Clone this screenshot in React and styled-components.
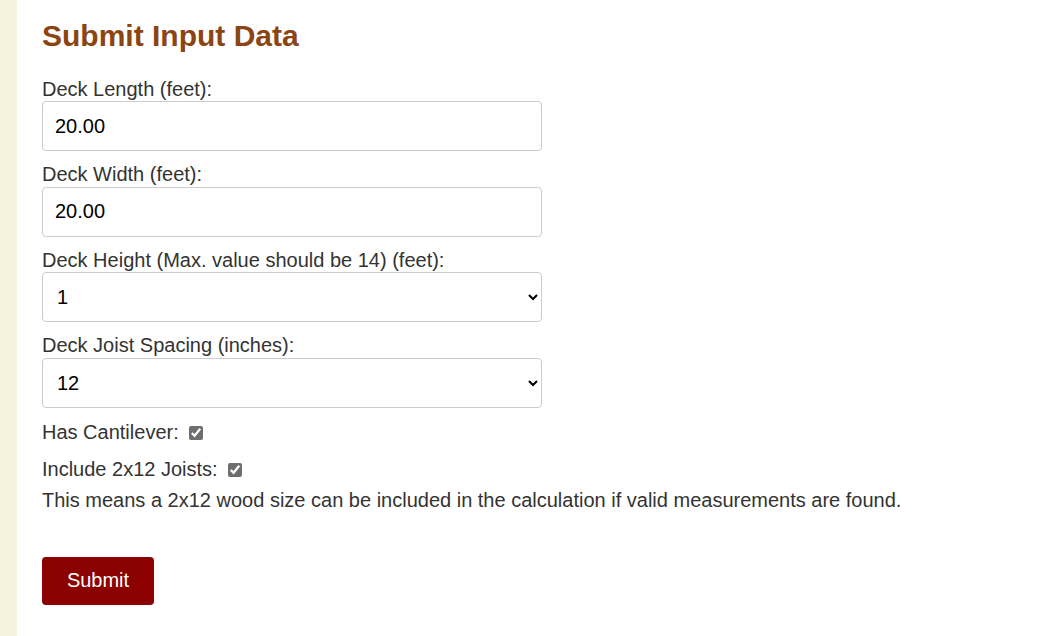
import React from 'react';
import styled, { createGlobalStyle } from 'styled-components';

const GlobalStyle = createGlobalStyle`
  html, body {
    margin: 0;
    padding: 0;
    background: #f5f3dc;
    font-family: "Liberation Sans", Arial, sans-serif;
  }
`;

const Page = styled.div`
  margin-left: 17px;
  min-height: 636px;
  background: #ffffff;
  padding: 19px 25px 30px;
  box-sizing: border-box;
`;

const Heading = styled.h2`
  margin: 0 0 24.5px;
  font-size: 30px;
  line-height: 34px;
  font-weight: 700;
  color: #8b4513;
`;

const Form = styled.form`
  display: flex;
  flex-direction: column;
  align-items: flex-start;
`;

const Label = styled.label`
  font-size: 20px;
  line-height: 23px;
  color: #333;
  margin-bottom: 0.5px;
`;

const Field = styled.input`
  width: 500px;
  height: 50px;
  box-sizing: border-box;
  padding: 0 12px;
  margin: 0 0 12px;
  border: 1px solid #ccc;
  border-radius: 4px;
  font-family: inherit;
  font-size: 20px;
  color: #000;
  background: #fff;
`;

const Select = styled.select`
  width: 500px;
  height: 50px;
  box-sizing: border-box;
  padding: 0 10px;
  margin: 0 0 12px;
  border: 1px solid #ccc;
  border-radius: 4px;
  font-family: inherit;
  font-size: 20px;
  color: #000;
  background: #fff;
`;

const CheckRow = styled.div`
  display: flex;
  align-items: center;
  height: 23px;
  font-size: 20px;
  color: #333;
  margin-top: ${p => p.$top}px;
`;

const Check = styled.input`
  width: 14px;
  height: 14px;
  margin: 0 0 0 10px;
  accent-color: #6e6e6e;
`;

const Note = styled.p`
  margin: 8px 0 44.5px;
  font-size: 20px;
  line-height: 23px;
  color: #333;
`;

const SubmitButton = styled.button`
  width: 112px;
  height: 48px;
  border: none;
  border-radius: 4px;
  background: #8b0000;
  color: #fff;
  font-family: inherit;
  font-size: 20px;
  cursor: pointer;
`;

const heights = Array.from({ length: 14 }, (_, i) => i + 1);

export default function App() {
  return (
    <>
      <GlobalStyle />
      <Page>
        <Heading>Submit Input Data</Heading>
        <Form onSubmit={e => e.preventDefault()}>
          <Label>Deck Length (feet):</Label>
          <Field type="text" defaultValue="20.00" />
          <Label>Deck Width (feet):</Label>
          <Field type="text" defaultValue="20.00" />
          <Label>Deck Height (Max. value should be 14) (feet):</Label>
          <Select defaultValue="1">
            {heights.map(h => (
              <option key={h} value={h}>{h}</option>
            ))}
          </Select>
          <Label>Deck Joist Spacing (inches):</Label>
          <Select defaultValue="12">
            <option value="12">12</option>
            <option value="16">16</option>
            <option value="24">24</option>
          </Select>
          <CheckRow $top={1.5}>
            Has Cantilever:
            <Check type="checkbox" defaultChecked />
          </CheckRow>
          <CheckRow $top={14}>
            Include 2x12 Joists:
            <Check type="checkbox" defaultChecked />
          </CheckRow>
          <Note>
            This means a 2x12 wood size can be included in the calculation if valid measurements are found.
          </Note>
          <SubmitButton type="submit">Submit</SubmitButton>
        </Form>
      </Page>
    </>
  );
}
